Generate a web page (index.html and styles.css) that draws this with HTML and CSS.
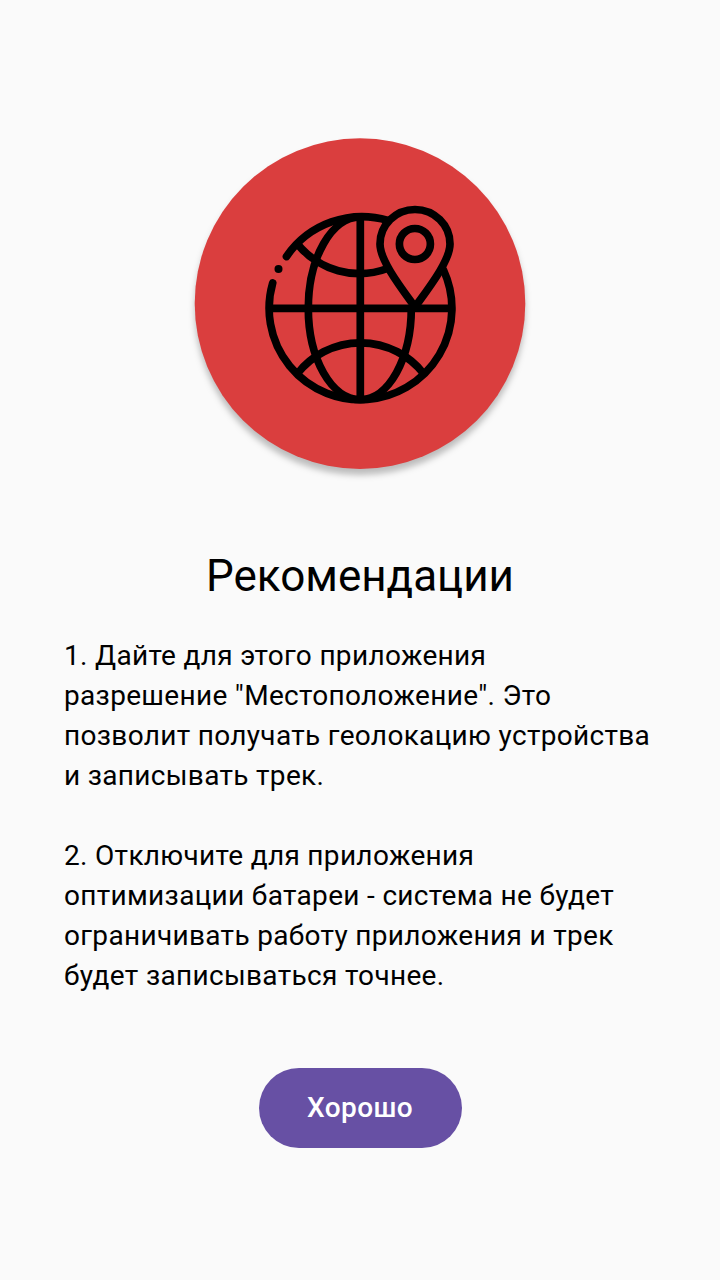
FILE: index.html
```html
<!DOCTYPE html>
<html lang="ru">
<head>
<meta charset="utf-8">
<title>Рекомендации</title>
<link rel="stylesheet" href="styles.css">
</head>
<body>
<main class="screen">
  <svg class="logo" viewBox="180 124 360 370" width="360" height="370" aria-hidden="true">
    <circle class="disc" cx="360" cy="303.600" r="165.300"/>
    <g class="icon">
      <g class="lines">
        <path d="M272.700 283A91.400 91.400 0 1 0 443.500 270"/>
        <path d="M286.500 256.500A91.400 91.400 0 0 1 388 220.500"/>
        <path class="inner" d="M360.300 217V400M269 308.300H452"/>
        <path class="inner" d="M360.300 217A52 91.350 0 0 0 360.300 399.700A51.200 91.400 0 0 0 411.300 308.300"/>
        <path class="inner" d="M297 243.500A80 80 0 0 0 387.500 268.500M297.500 373.500A80 80 0 0 1 423.500 373.500"/>
        <path d="M415 307C402 289 380 261 380 244A35 34.500 0 0 1 450 244C450 261 428 289 415 307Z"/>
        <circle cx="414.900" cy="244" r="15.500"/>
      </g>
      <circle cx="278.500" cy="269" r="4"/>
    </g>
  </svg>
  <h1 class="title">Рекомендации</h1>
  <div class="tips">
    <p class="tip">1. Дайте для этого приложения<br>разрешение "Местоположение". Это<br>позволит получать геолокацию устройства<br>и записывать трек.</p>
    <p class="tip">2. Отключите для приложения<br>оптимизации батареи - система не будет<br>ограничивать работу приложения и трек<br>будет записываться точнее.</p>
  </div>
  <button class="confirm" type="button">Хорошо</button>
</main>
</body>
</html>
```
FILE: styles.css
```css
* { box-sizing: border-box; }
body { margin: 0; background: #fafafa; color: #000; font-family: Roboto, sans-serif; }
.screen { height: 1280px; padding-top: 124px; display: flex; flex-direction: column; align-items: center; }
.logo { display: block; flex: none; }
.disc { fill: #da3e3e; filter: blur(.6px) drop-shadow(0 6px 3px rgba(0, 0, 0, .25)); }
.icon { filter: blur(.7px); }
.lines { fill: none; stroke: #000; stroke-width: 7.7; stroke-linecap: round; stroke-linejoin: round; }
.inner { stroke-linecap: butt; }
.title { margin: 54px 0 0; font-size: 44px; line-height: 56px; font-weight: 400; letter-spacing: 0; white-space: nowrap; }
.tips { width: 592px; margin-top: 32px; display: grid; gap: 40px; }
.tip { margin: 0; font-size: 28px; line-height: 40px; letter-spacing: .32px; white-space: nowrap; }
.confirm { width: 203px; height: 80px; margin-top: 72px; padding: 0; border: 0; border-radius: 40px; background: #6750a4; color: #fff; font: 500 28px/40px Roboto, sans-serif; letter-spacing: .4px; }
```
